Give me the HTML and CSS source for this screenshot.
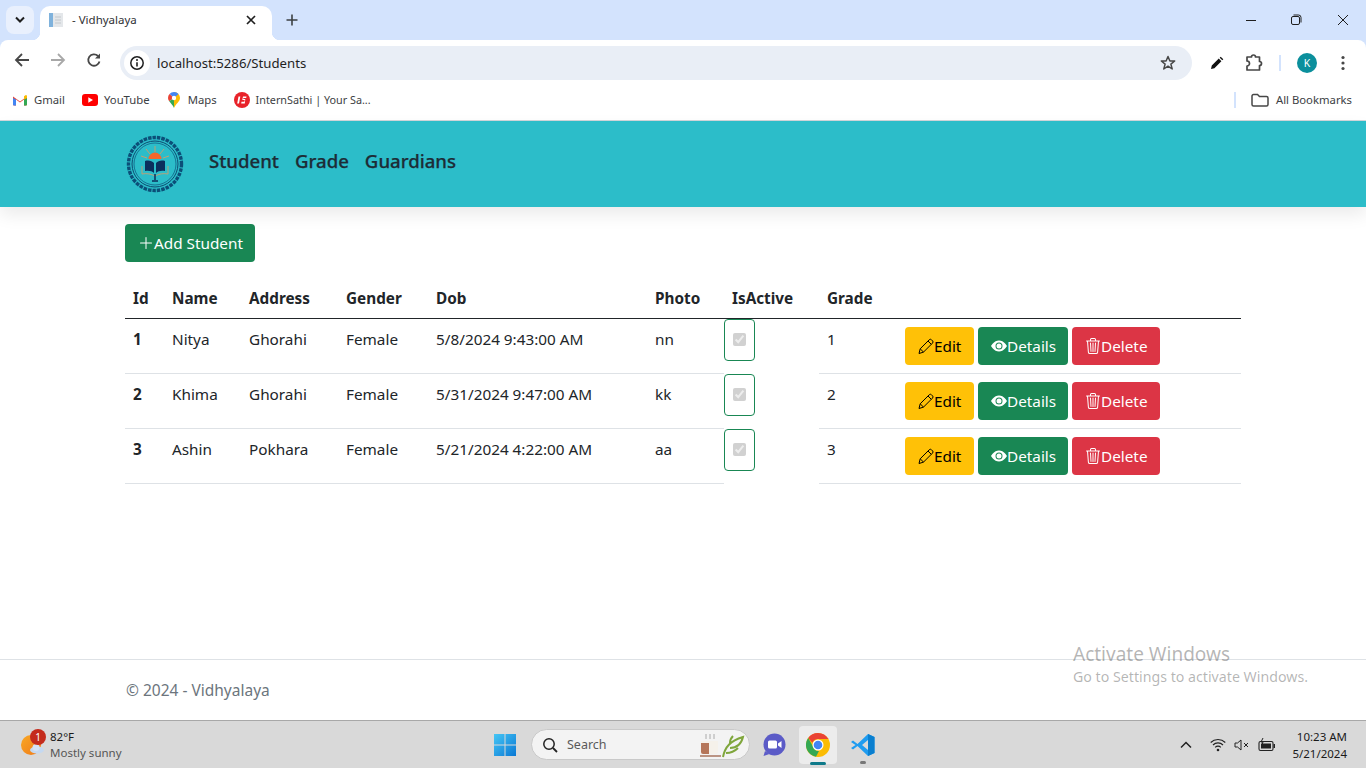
FILE: index.html
```html
<!DOCTYPE html>
<html lang="en">
<head>
<meta charset="utf-8">
<title>- Vidhyalaya</title>
<link rel="stylesheet" href="styles.css">
</head>
<body>
<svg class="defs" width="0" height="0" aria-hidden="true">
  <defs>
    <symbol id="i-pencil" viewBox="0 0 16 16"><path d="M1 15.500 2.200 10.800 11.200 1.800a1.600 1.600 0 0 1 2.300 0l1 1a1.600 1.600 0 0 1 0 2.300L5.500 14.100ZM2.200 10.800l3.300 3.300M10 3l3.300 3.300" fill="none" stroke="currentColor" stroke-width="1"/></symbol>
    <symbol id="i-eye" viewBox="0 0 16 16"><path d="M10.500 8a2.500 2.500 0 1 1-5 0 2.500 2.500 0 0 1 5 0z"/><path d="M0 8s3-5.500 8-5.500S16 8 16 8s-3 5.500-8 5.500S0 8 0 8zm8 3.500a3.500 3.500 0 1 0 0-7 3.500 3.500 0 0 0 0 7z"/></symbol>
    <symbol id="i-trash" viewBox="0 0 16 16"><path d="M6.500 1h3a.5.5 0 0 1 .5.5v1H6v-1a.5.5 0 0 1 .5-.5ZM11 2.500v-1A1.500 1.500 0 0 0 9.500 0h-3A1.500 1.500 0 0 0 5 1.500v1H2.506a.58.58 0 0 0-.01 0H1.500a.5.5 0 0 0 0 1h.538l.853 10.660A2 2 0 0 0 4.885 16h6.230a2 2 0 0 0 1.994-1.840l.853-10.660h.538a.5.5 0 0 0 0-1h-.995a.59.59 0 0 0-.01 0H11Zm1.958 1-.846 10.580a1 1 0 0 1-.997.920h-6.230a1 1 0 0 1-.997-.920L3.042 3.500h9.916Zm-7.487 1a.5.5 0 0 1 .528.470l.5 8.500a.5.5 0 0 1-.998.060L5 5.030a.5.5 0 0 1 .470-.530Zm5.058 0a.5.5 0 0 1 .470.530l-.5 8.500a.5.5 0 1 1-.998-.060l.5-8.500a.5.5 0 0 1 .528-.470ZM8 4.500a.5.5 0 0 1 .5.500v8.500a.5.5 0 0 1-1 0V5a.5.5 0 0 1 .5-.5Z"/></symbol>
  </defs>
</svg>

<header class="chrome">
  <div class="tabstrip">
    <button class="tabsearch" type="button"><svg width="12" height="8" viewBox="0 0 12 8"><path d="M2 1.500 6 5.500 10 1.500" fill="none" stroke="#1f1f1f" stroke-width="2"/></svg></button>
    <div class="tab">
      <svg class="favicon" width="16" height="16" viewBox="0 0 16 16"><rect x="1" y="1" width="5" height="14" fill="#7fb2dc"/><rect x="5" y="1" width="10" height="14" fill="#e4e7ea"/><path d="M7 5h6M7 8h6M7 11h6" stroke="#c3c8cc" stroke-width="1"/></svg>
      <span class="tabtitle">- Vidhyalaya</span>
      <svg class="tabclose" width="10" height="10" viewBox="0 0 10 10"><path d="M1 1 9 9M9 1 1 9" stroke="#1f1f1f" stroke-width="1.700"/></svg>
    </div>
    <svg class="newtab" width="12" height="12" viewBox="0 0 12 12"><path d="M6 .5v11M.5 6h11" stroke="#3c4043" stroke-width="1.600"/></svg>
    <div class="winctl">
      <svg width="46" height="12" viewBox="0 0 46 12"><path d="M18 6.500h10" stroke="#1f1f1f" stroke-width="1"/></svg>
      <svg width="46" height="12" viewBox="0 0 46 12"><rect x="17.500" y="2.500" width="8" height="8" rx="1.500" fill="none" stroke="#1f1f1f"/><path d="M19.500 1h5a2.500 2.500 0 0 1 2.500 2.500v5" fill="none" stroke="#1f1f1f"/></svg>
      <svg width="46" height="12" viewBox="0 0 46 12"><path d="M18 1l10 10M28 1 18 11" stroke="#1f1f1f" stroke-width="1"/></svg>
    </div>
  </div>
  <div class="toolbar">
    <svg class="tool" width="16" height="16" viewBox="0 0 16 16"><path d="M15 8H2M8 2 2 8l6 6" fill="none" stroke="#474747" stroke-width="1.800"/></svg>
    <svg class="tool" width="16" height="16" viewBox="0 0 16 16"><path d="M1 8h13M8 2l6 6-6 6" fill="none" stroke="#a8a8a8" stroke-width="1.800"/></svg>
    <svg class="tool" width="16" height="16" viewBox="0 0 16 16"><path d="M13.500 9.500A5.700 5.700 0 1 1 12 4" fill="none" stroke="#474747" stroke-width="1.800"/><path d="M14 1.500V6.500H9Z" fill="#474747"/></svg>
    <div class="omnibox">
      <span class="infochip"><svg width="16" height="16" viewBox="0 0 16 16"><circle cx="8" cy="8" r="6.200" fill="none" stroke="#1f1f1f" stroke-width="1.500"/><path d="M8 7.200v4.200" stroke="#1f1f1f" stroke-width="1.600"/><circle cx="8" cy="5" r="1" fill="#1f1f1f"/></svg></span>
      <span class="url">localhost:5286/Students</span>
      <svg class="star" width="16" height="16" viewBox="0 0 16 16"><path d="M8 1.500 9.900 6h4.800l-3.800 3.100 1.300 4.900L8 11.200 3.800 14l1.300-4.900L1.300 6h4.800Z" fill="none" stroke="#474747" stroke-width="1.500" stroke-linejoin="round"/></svg>
    </div>
    <div class="toolright">
      <svg class="t-pen" width="14" height="14" viewBox="0 0 14 14"><path d="M1 13l.8-3.400 7-7 2.600 2.600-7 7ZM9.700 1.700l1-1 2.600 2.600-1 1Z" fill="#111"/></svg>
      <svg class="t-ext" width="20" height="20" viewBox="0 0 20 20"><path d="M3 4H7.500a2 2 0 0 1 4 0H15.500V8.500a2 2 0 0 1 0 4V17H3V13a2.500 2.500 0 0 0 0-5Z" fill="none" stroke="#474747" stroke-width="1.700" stroke-linejoin="round"/></svg>
      <span class="tooldiv"></span>
      <span class="avatar">K</span>
      <svg width="4" height="16" viewBox="0 0 4 16"><circle cx="2" cy="2.500" r="1.600" fill="#474747"/><circle cx="2" cy="8" r="1.600" fill="#474747"/><circle cx="2" cy="13.500" r="1.600" fill="#474747"/></svg>
    </div>
  </div>
  <div class="bookmarks">
    <span class="bm bm-gmail"><svg width="14" height="11" viewBox="0 0 14 11"><path d="M0 1.500 7 6.500l7-5V9.500a1 1 0 0 1-1 1H11V4.500L7 7.500 3 4.500v6H1a1 1 0 0 1-1-1Z" fill="#ea4335"/><path d="M0 3v6.500a1 1 0 0 0 1 1h2V4.500Z" fill="#4285f4"/><path d="M14 3v6.500a1 1 0 0 1-1 1h-2V4.500Z" fill="#34a853"/><path d="M11 4.500V1.300L12.400.3a1 1 0 0 1 1.600.8V3Z" fill="#fbbc04"/></svg>Gmail</span>
    <span class="bm bm-yt"><svg width="16" height="12" viewBox="0 0 16 12"><rect width="16" height="12" rx="3" fill="#f00"/><path d="M6.300 3.300 11 6 6.300 8.700Z" fill="#fff"/></svg>YouTube</span>
    <span class="bm bm-maps"><svg width="12" height="16" viewBox="0 0 12 16"><path d="M6 0a6 6 0 0 1 6 6c0 3.500-4 5.500-6 10Z" fill="#fbbc04"/><path d="M6 0A6 6 0 0 0 1.500 2L6 6l4.500-4A6 6 0 0 0 6 0Z" fill="#4285f4"/><path d="M1.500 2A6 6 0 0 0 0 6c0 1.200.5 2.300 1.200 3.300L6 6Z" fill="#ea4335"/><path d="M1.200 9.300C2.800 11.500 5 13.200 6 16V6Z" fill="#34a853"/><circle cx="6" cy="6" r="2.200" fill="#fff"/></svg>Maps</span>
    <span class="bm bm-intern"><svg width="16" height="16" viewBox="0 0 16 16"><circle cx="8" cy="8" r="8" fill="#e8232a"/><path d="M4.500 4.500h1.800L5 11.500H3.200ZM12.500 4.500H9L8.300 8h2.400l-.3 1.800H7.500l-.3 1.700h3.600L11.300 7H9.200l.2-1h2.800Z" fill="#fff"/></svg><span class="bm-intern-text">InternSathi | Your Sa...</span></span>
    <span class="bm-spacer"></span>
    <span class="tooldiv"></span>
    <span class="bm bm-all"><svg width="18" height="14" viewBox="0 0 18 14"><path d="M1 3a1.500 1.500 0 0 1 1.500-1.500h4L8.500 3.500h7A1.500 1.500 0 0 1 17 5v6.500a1.500 1.500 0 0 1-1.500 1.500h-13A1.500 1.500 0 0 1 1 11.500Z" fill="none" stroke="#474747" stroke-width="1.500"/></svg>All Bookmarks</span>
  </div>
</header>

<nav class="navbar">
  <div class="container navrow">
    <svg class="logo" width="60" height="60" viewBox="0 0 60 60">
      <circle cx="30" cy="30" r="26.500" fill="none" stroke="#0b4f78" stroke-width="3.400" stroke-dasharray="3.500 1"/>
      <circle cx="30" cy="30" r="23" fill="none" stroke="#0d4a70" stroke-width="1"/>
      <circle cx="30" cy="30" r="21" fill="none" stroke="#0f5f85" stroke-width=".8"/>
      <path d="M30 12v6M21 15l4 5M39 15l-4 5M16 22l6 2M44 22l-6 2" stroke="#e39a5a" stroke-width=".8"/>
      <path d="M23.500 25a6.500 6.500 0 0 1 13 0Z" fill="#f4672c"/>
      <path d="M20 27c4-1 7 0 9 2v10c-2-2-5-2.500-9-2ZM40 27c-4-1-7 0-9 2v10c2-2 5-2.500 9-2Z" fill="#0b2f5c"/>
      <path d="M17 32v8c5-1 9 0 13 2 4-2 8-3 13-2v-8" fill="none" stroke="#d99a66" stroke-width=".8"/>
      <path d="M30 40v6M27 47h6" stroke="#0b2f5c" stroke-width="1.500"/>
    </svg>
    <a class="navlink" href="#">Student</a>
    <a class="navlink" href="#">Grade</a>
    <a class="navlink" href="#">Guardians</a>
  </div>
</nav>

<main class="container content">
  <button class="btn btn-add" type="button"><svg class="ico ico-plus" width="16" height="16" viewBox="0 0 16 16"><path d="M8 2a.5.5 0 0 1 .5.5v5h5a.5.5 0 0 1 0 1h-5v5a.5.5 0 0 1-1 0v-5h-5a.5.5 0 0 1 0-1h5v-5A.5.5 0 0 1 8 2Z"/></svg>Add Student</button>
  <table class="table">
    <colgroup>
      <col class="c-id"><col class="c-name"><col class="c-addr"><col class="c-gender"><col class="c-dob"><col class="c-photo"><col class="c-active"><col class="c-grade"><col class="c-act">
    </colgroup>
    <thead>
      <tr><th>Id</th><th>Name</th><th>Address</th><th>Gender</th><th>Dob</th><th>Photo</th><th>IsActive</th><th>Grade</th><th></th></tr>
    </thead>
    <tbody>
      <tr>
        <th>1</th><td>Nitya</td><td>Ghorahi</td><td>Female</td><td>5/8/2024 9:43:00 AM</td><td>nn</td>
        <td class="activecell"><span class="activebox"><input class="check" type="checkbox" checked disabled></span></td>
        <td>1</td>
        <td class="actions"><button class="btn btn-edit" type="button"><svg class="ico" width="16" height="16"><use href="#i-pencil"/></svg>Edit</button><button class="btn btn-view" type="button"><svg class="ico" width="16" height="16"><use href="#i-eye"/></svg>Details</button><button class="btn btn-del" type="button"><svg class="ico" width="16" height="16"><use href="#i-trash"/></svg>Delete</button></td>
      </tr>
      <tr>
        <th>2</th><td>Khima</td><td>Ghorahi</td><td>Female</td><td>5/31/2024 9:47:00 AM</td><td>kk</td>
        <td class="activecell"><span class="activebox"><input class="check" type="checkbox" checked disabled></span></td>
        <td>2</td>
        <td class="actions"><button class="btn btn-edit" type="button"><svg class="ico" width="16" height="16"><use href="#i-pencil"/></svg>Edit</button><button class="btn btn-view" type="button"><svg class="ico" width="16" height="16"><use href="#i-eye"/></svg>Details</button><button class="btn btn-del" type="button"><svg class="ico" width="16" height="16"><use href="#i-trash"/></svg>Delete</button></td>
      </tr>
      <tr>
        <th>3</th><td>Ashin</td><td>Pokhara</td><td>Female</td><td>5/21/2024 4:22:00 AM</td><td>aa</td>
        <td class="activecell"><span class="activebox"><input class="check" type="checkbox" checked disabled></span></td>
        <td>3</td>
        <td class="actions"><button class="btn btn-edit" type="button"><svg class="ico" width="16" height="16"><use href="#i-pencil"/></svg>Edit</button><button class="btn btn-view" type="button"><svg class="ico" width="16" height="16"><use href="#i-eye"/></svg>Details</button><button class="btn btn-del" type="button"><svg class="ico" width="16" height="16"><use href="#i-trash"/></svg>Delete</button></td>
      </tr>
    </tbody>
  </table>
</main>

<footer class="footer">
  <div class="container footer-text">© 2024 - Vidhyalaya</div>
</footer>

<div class="watermark">
  <div class="wm-title">Activate Windows</div>
  <div class="wm-sub">Go to Settings to activate Windows.</div>
</div>

<div class="taskbar">
  <div class="weather">
    <span class="wicon">
      <svg width="30" height="30" viewBox="0 0 30 30"><defs><linearGradient id="sun" x1="0" y1="0" x2="1" y2="1"><stop offset="0" stop-color="#f9a825"/><stop offset="1" stop-color="#ef7a1a"/></linearGradient></defs><circle cx="13" cy="15" r="10" fill="url(#sun)"/><ellipse cx="19" cy="20" rx="7" ry="3.500" fill="#c5d9f1"/><circle cx="18" cy="17.500" r="3.500" fill="#d5e3f5"/></svg>
      <span class="wbadge">1</span>
    </span>
    <span class="wtext"><span class="wtemp">82°F</span><span class="wdesc">Mostly sunny</span></span>
  </div>
  <div class="taskcenter">
    <svg width="24" height="24" viewBox="0 0 24 24"><defs><linearGradient id="win" x1="0" y1="0" x2="1" y2="1"><stop offset="0" stop-color="#45c6f5"/><stop offset="1" stop-color="#0a78d4"/></linearGradient></defs><path d="M1 1h10.500v10.500H1ZM12.500 1H23v10.500H12.500ZM1 12.500h10.500V23H1ZM12.500 12.500H23V23H12.500Z" fill="url(#win)"/></svg>
    <div class="tasksearch">
      <svg width="16" height="16" viewBox="0 0 16 16"><circle cx="7" cy="7" r="5.200" fill="none" stroke="#222" stroke-width="1.500"/><path d="M11 11l4 4" stroke="#222" stroke-width="1.800"/></svg>
      <span class="tasksearch-text">Search</span>
      <svg class="tea" width="46" height="26" viewBox="0 0 46 26"><path d="M2 9h17v11a2 2 0 0 1-2 2H4a2 2 0 0 1-2-2Z" fill="#f5f1ea"/><path d="M2 11h8v11H4a2 2 0 0 1-2-2Z" fill="#b5765a"/><path d="M1 24h21" stroke="#a8745e" stroke-width="1.500"/><path d="M7 2v5M11 2v5M15 2v5" stroke="#aaa" stroke-width="1"/><path d="M24 25C26 15 31 9 44 5c-2 8-6 11-13 11M27 21c3 0 8-1 12-5M31 11c0-3 1-5 3-7" fill="none" stroke="#7fa63c" stroke-width="2"/></svg>
    </div>
    <svg width="24" height="24" viewBox="0 0 24 24"><circle cx="12.500" cy="11.500" r="11" fill="#5b5bc7"/><path d="M3 18l-1.500 5 6-2Z" fill="#5b5bc7"/><rect x="6" y="7.500" width="9" height="8" rx="1.500" fill="#fff"/><path d="M16 10.500l3.500-2.500v7L16 12.500Z" fill="#fff"/></svg>
    <span class="taskchrome">
      <svg width="24" height="24" viewBox="0 0 24 24"><circle cx="12" cy="12" r="12" fill="#fbbc04"/><path d="M12 0a12 12 0 0 1 10.400 6H12a6 6 0 0 0-5.600 3.800L2.200 5A12 12 0 0 1 12 0Z" fill="#ea4335"/><path d="M2.200 5 7 13.500A6 6 0 0 0 13 17.900L10 23.800A12 12 0 0 1 2.200 5Z" fill="#34a853"/><circle cx="12" cy="12" r="5.500" fill="#fff"/><circle cx="12" cy="12" r="4.300" fill="#4285f4"/></svg>
    </span>
    <span class="taskvscode">
      <svg width="24" height="24" viewBox="0 0 24 24"><path d="M17 1 23.500 4v16L17 23 6.500 13 2 16.500 0 15l4.500-3L0 9l2-1.500L6.500 11Zm0 6-6 5 6 5Z" fill="#1f9cf0"/><path d="M17 1 23.500 4v16L17 23Z" fill="#0a7fcf"/></svg>
    </span>
  </div>
  <div class="tray">
    <svg class="t-chev" width="12" height="8" viewBox="0 0 12 8"><path d="M1 6.500 6 1.500l5 5" fill="none" stroke="#222" stroke-width="1.500"/></svg>
    <svg width="16" height="14" viewBox="0 0 16 14"><path d="M.7 4.500a10.500 10.500 0 0 1 14.600 0M3 7a7 7 0 0 1 10 0M5.200 9.400a3.800 3.800 0 0 1 5.600 0" fill="none" stroke="#222" stroke-width="1.100"/><circle cx="8" cy="12" r="1.300" fill="#222"/></svg>
    <svg width="16" height="14" viewBox="0 0 16 14"><path d="M1 5h2.500L7 2v10L3.500 9H1Z" fill="none" stroke="#222" stroke-width="1"/><path d="M10 5l4 4M14 5l-4 4" stroke="#222" stroke-width="1"/></svg>
    <svg width="18" height="14" viewBox="0 0 18 14"><rect x="1" y="3.500" width="14" height="9" rx="1.500" fill="none" stroke="#222" stroke-width="1.100"/><rect x="3" y="5.500" width="10" height="5" fill="#222"/><rect x="15.500" y="6" width="1.500" height="4" fill="#222"/><path d="M5 0 3 4h2L4 7" fill="none" stroke="#222" stroke-width="1"/></svg>
    <span class="clock"><span>10:23 AM</span><span>5/21/2024</span></span>
  </div>
</div>
</body>
</html>
```
FILE: styles.css
```css
* { box-sizing: border-box; }
html, body { margin: 0; padding: 0; height: 768px; overflow: hidden; }
body {
  width: 1366px;
  position: relative;
  display: flex;
  flex-direction: column;
  font-family: "Noto Sans", "Open Sans", sans-serif;
  font-size: 15.3px;
  line-height: 24px;
  color: #212529;
  background: #fff;
}
.defs { position: absolute; }
svg { display: block; flex: none; }
button { font-family: inherit; }

/* Browser frame */
.chrome { height: 121px; flex: none; background: #d3e3fd; }
.tabstrip { height: 40px; display: flex; align-items: flex-end; position: relative; }
.tabsearch {
  width: 28px; height: 28px; margin: 0 6px 6px 6px; padding: 0; border: 0; border-radius: 8px;
  background: #e9f0fd; display: flex; align-items: center; justify-content: center;
}
.tab {
  width: 232px; height: 34px; background: #fff; border-radius: 10px 10px 0 0;
  display: flex; align-items: center; padding: 0 16px 6px 8px; position: relative;
}
.tab::before, .tab::after {
  content: ""; position: absolute; bottom: 0; width: 8px; height: 8px;
}
.tab::before { left: -8px; background: radial-gradient(circle at 0 0, transparent 8px, #fff 8.5px); }
.tab::after { right: -8px; background: radial-gradient(circle at 100% 0, transparent 8px, #fff 8.5px); }
.tabtitle { font-size: 11.5px; margin-left: 8px; flex: 1; color: #303134; }
.newtab { margin: 0 0 14px 14px; }
.winctl { margin-left: auto; display: flex; align-self: flex-start; margin-top: 14px; }
.toolbar {
  height: 40px; background: #fff; border-radius: 8px 8px 0 0; display: flex; align-items: center;
  padding: 0 14px; gap: 20px;
}
.tool { flex: none; }
.omnibox {
  margin: 6px 0 0 -2px; height: 34px; width: 1072px; flex: none; border-radius: 17px; background: #e9eef6;
  display: flex; align-items: center; padding: 0 16px 0 4px;
}
.infochip { width: 26px; height: 26px; border-radius: 50%; background: #fff; display: flex; align-items: center; justify-content: center; }
.url { font-size: 13.2px; margin-left: 7px; flex: 1; color: #1f1f1f; }
.toolright { display: flex; align-items: center; margin-left: -2px; margin-top: 6px; }
.t-ext { margin-left: 20px; }
.toolright .tooldiv { margin: 0 16px 0 15px; height: 16px; }
.tooldiv { display: block; width: 2px; height: 16px; background: #d3e3fd; flex: none; }
.avatar {
  width: 20px; height: 20px; border-radius: 50%; background: #0b8f9c; color: #fff; font-size: 10.5px;
  line-height: 20px; text-align: center; margin-right: 24px; flex: none;
}
.bookmarks {
  height: 41px; background: #fff; border-bottom: 1px solid #d3d7db; display: flex; align-items: center;
  font-size: 11.3px; color: #3c4043; padding: 0 14px 0 13px;
}
.bm { display: flex; align-items: center; gap: 8px; white-space: nowrap; }
.bm-gmail { gap: 7px; margin-right: 17px; }
.bm-yt { gap: 6px; margin-right: 18px; }
.bm-maps { gap: 8px; margin-right: 17px; }
.bm-intern { gap: 6px; }
.bm-intern-text { font-size: 10.8px; }
.bm-spacer { flex: 1; }
.bm-all { margin-left: 15px; gap: 7px; }

/* Page */
.container { width: 1116px; margin: 0 auto; }
.navbar {
  height: 86px; flex: none; background: #2cbdc9; box-shadow: 0 8px 16px rgba(0, 0, 0, .08);
  display: flex; align-items: center; position: relative;
}
.navrow { display: flex; align-items: center; }
.logo { margin-right: 24px; }
.navlink {
  font-size: 18.6px; font-weight: 500; -webkit-text-stroke: .25px #1d2c36; color: #1d2c36; text-decoration: none;
  margin-right: 16px; padding-bottom: 6px;
}
.content { flex: 1; padding-top: 17px; }
.btn {
  display: inline-flex; align-items: center; height: 38px; padding: 0 0 0 12px; border: 1px solid transparent;
  border-radius: 4px; font-size: 15.3px; line-height: 24px; white-space: nowrap;
}
.ico { fill: currentColor; }
.btn-add { background: #198754; color: #fff; width: 130px; }
.btn-edit { background: #ffc107; color: #000; width: 69px; }
.btn-view { background: #198754; color: #fff; width: 90px; }
.btn-del { background: #dc3545; color: #fff; width: 88px; }
.table { width: 1116px; border-collapse: collapse; table-layout: fixed; margin-top: 19px; }
.c-id { width: 39px; } .c-name { width: 77px; } .c-addr { width: 97px; } .c-gender { width: 90px; }
.c-dob { width: 219px; } .c-photo { width: 77px; } .c-active { width: 95px; } .c-grade { width: 78px; } .c-act { width: 344px; }
.table th, .table td { text-align: left; vertical-align: top; padding: 8px; }
.table thead th { height: 37px; border-bottom: 1px solid #212529; font-weight: 700; padding-top: 5px; padding-bottom: 7px; }
.table tbody th, .table tbody td { height: 55px; border-bottom: 1px solid #dee2e6; }
.table tbody th { font-weight: 700; }
.table tbody .activecell { padding: 0; border-bottom: 0; }
.activebox {
  display: flex; align-items: center; justify-content: center; width: 31px; height: 42px;
  border: 1px solid #198754; border-radius: 4px;
}
.check { width: 13px; height: 13px; margin: 0; accent-color: #6c757d; }
.table tbody .actions { padding: 8px; display: flex; gap: 4px; }
.footer {
  height: 61px; flex: none; border-top: 1px solid #dee2e6; color: #6c757d; display: flex; align-items: center;
}
.footer-text { font-size: 15.5px; padding-left: 1px; }
.watermark { position: absolute; left: 1073px; top: 642px; color: rgba(60, 60, 60, .38); }
.wm-title { font-size: 19px; line-height: 25px; }
.wm-sub { font-size: 14.2px; line-height: 20px; white-space: nowrap; }

/* Taskbar */
.taskbar {
  height: 48px; flex: none; background: #d9d9d9; border-top: 1px solid #a8a8a8; display: flex; align-items: center;
  position: relative; font-size: 11.5px; color: #1a1a1a;
}
.weather { display: flex; align-items: center; margin-left: 18px; gap: 10px; position: absolute; left: 0; top: 0; height: 47px; }
.wicon { position: relative; width: 22px; height: 30px; }
.wbadge {
  position: absolute; left: 12px; top: -1px; width: 16px; height: 16px; border-radius: 50%; background: #c42b1c; color: #fff;
  font-size: 10px; line-height: 16px; text-align: center;
}
.wtext { display: flex; flex-direction: column; line-height: 16px; }
.wdesc { color: #555; }
.taskcenter { display: flex; align-items: center; margin-left: 493px; }
.tasksearch {
  width: 219px; height: 31px; margin: 0 12px 0 14px; background: #f3f3f3; border: 1px solid #c9c9c9; border-radius: 16px;
  display: flex; align-items: center; padding: 0 4px 0 10px; font-size: 12.5px; color: #5a5a5a;
}
.tasksearch-text { margin-left: 9px; flex: 1; }
.taskchrome {
  width: 38px; height: 38px; margin: 0 14px 0 13px; border-radius: 4px; background: #ececec; display: flex; align-items: center; justify-content: center;
  position: relative;
}
.taskchrome::after { content: ""; position: absolute; left: 11px; bottom: -1px; width: 16px; height: 3px; border-radius: 2px; background: #0f7a8a; }
.taskvscode { position: relative; }
.taskvscode::after { content: ""; position: absolute; left: 9px; bottom: -7px; width: 6px; height: 3px; border-radius: 2px; background: #777; }
.tray { position: absolute; right: 19px; top: 0; height: 47px; display: flex; align-items: center; gap: 8px; }
.t-chev { margin-right: 10px; }
.clock { display: flex; flex-direction: column; align-items: flex-end; line-height: 17px; margin-left: 8px; }
```
